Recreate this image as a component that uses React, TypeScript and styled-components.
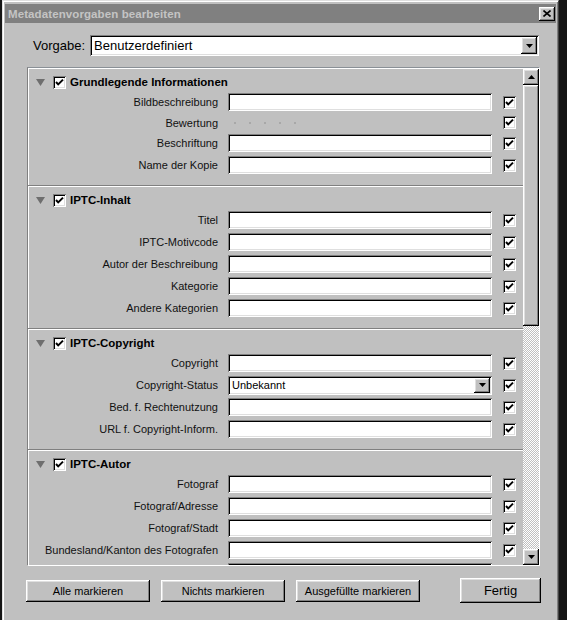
import React from "react";
import styled, { createGlobalStyle, css } from "styled-components";

const Global = createGlobalStyle`
  html, body { margin: 0; padding: 0; background: #151515; overflow: hidden; }
  body { font-family: "Liberation Sans", Arial, sans-serif; }
  #root { width: 567px; height: 620px; }
`;

const raised = css`
  background: #c0c0c0;
  box-shadow: inset -1px -1px 0 #000, inset 1px 1px 0 #fff,
    inset -2px -2px 0 #808080, inset 2px 2px 0 #dfdfdf;
`;

const sunken = css`
  box-shadow: inset 1px 1px 0 #808080, inset -1px -1px 0 #fff,
    inset 2px 2px 0 #000, inset -2px -2px 0 #dfdfdf;
`;

const Window = styled.div`
  margin-left: 2px;
  width: 557px;
  height: 620px;
  box-sizing: border-box;
  background: #c0c0c0;
  border-top: 1px solid #dfdfdf;
  border-left: 1px solid #dfdfdf;
  border-right: 1px solid #404040;
  box-shadow: inset 1px 1px 0 #fff, inset -1px 0 0 #808080;
  padding: 2px 2px 0 2px;
  display: flex;
  flex-direction: column;
`;

const TitleBar = styled.div`
  height: 19px;
  margin-top: 1px;
  background: #808080;
  display: flex;
  align-items: center;
  justify-content: space-between;
  padding: 0 1px 0 3px;
`;

const TitleText = styled.span`
  font: bold 11.5px "Liberation Sans", Arial, sans-serif;
  color: #c4c4c4;
  letter-spacing: 0.1px;
`;

const CloseButton = styled.div`
  ${raised};
  width: 16px;
  height: 14px;
  display: flex;
  align-items: center;
  justify-content: center;
`;

const PresetRow = styled.div`
  margin-top: 12px;
  padding: 0 17px 0 28px;
  display: flex;
  align-items: center;
  gap: 5px;
`;

const PresetLabel = styled.span`
  font-size: 13px;
  color: #000;
`;

const Combo = styled.div`
  ${sunken};
  flex: 1;
  height: 21px;
  box-sizing: border-box;
  background: #fff;
  display: flex;
  align-items: center;
  padding: 2px;
`;

const ComboText = styled.span<{ $size: number }>`
  flex: 1;
  padding-left: 2px;
  font-size: ${(p) => p.$size}px;
  color: #000;
  white-space: nowrap;
`;

const DropButton = styled.div<{ $w: number; $h: number }>`
  ${raised};
  width: ${(p) => p.$w}px;
  height: ${(p) => p.$h}px;
  display: flex;
  align-items: center;
  justify-content: center;
  flex: none;
`;

const Panel = styled.div`
  margin: 11px 0 0 22px;
  width: 513px;
  height: 499px;
  box-sizing: border-box;
  border: 1px solid;
  border-color: #8a9096 #fff #fff #808080;
  box-shadow: inset 1px 1px 0 #fff;
  display: flex;
`;

const Content = styled.div`
  flex: 1;
  overflow: hidden;
  display: flex;
  flex-direction: column;
`;

const Section = styled.section`
  padding: 5px 0 9px;
  flex: none;
  & + & {
    border-top: 1px solid #808080;
    box-shadow: inset 0 1px 0 #fff;
  }
`;

const SectionHeader = styled.div`
  height: 18px;
  display: flex;
  align-items: center;
  padding-left: 8px;
`;

const Disclosure = styled.svg`
  width: 9px;
  height: 7px;
  margin-right: 8px;
  flex: none;
`;

const SectionTitle = styled.span`
  margin-left: 4px;
  font: bold 11.5px "Liberation Sans", Arial, sans-serif;
  color: #000;
`;

const Row = styled.div<{ $h: number }>`
  height: ${(p) => p.$h}px;
  display: flex;
  align-items: center;
`;

const FieldLabel = styled.span`
  width: 190px;
  flex: none;
  text-align: right;
  font-size: 11px;
  color: #111;
  white-space: nowrap;
`;

const TextField = styled.div`
  ${sunken};
  margin-left: 10px;
  width: 264px;
  height: 18px;
  box-sizing: border-box;
  background: #fff;
  flex: none;
`;

const SelectField = styled.div`
  ${sunken};
  margin-left: 10px;
  width: 264px;
  height: 19px;
  box-sizing: border-box;
  background: #fff;
  flex: none;
  display: flex;
  align-items: center;
  padding: 2px;
`;

const Rating = styled.div`
  margin-left: 16px;
  width: 258px;
  display: flex;
  gap: 13px;
  flex: none;
`;

const Dot = styled.span`
  width: 2px;
  height: 2px;
  background: #a8a8a8;
`;

const Box = styled.div<{ $gap: number }>`
  ${sunken};
  margin-left: ${(p) => p.$gap}px;
  width: 13px;
  height: 13px;
  box-sizing: border-box;
  background: #fff;
  flex: none;
  display: flex;
  align-items: center;
  justify-content: center;
`;

const ScrollBar = styled.div`
  width: 16px;
  flex: none;
  display: flex;
  flex-direction: column;
  padding-top: 1px;
`;

const ScrollArrow = styled.div`
  ${raised};
  height: 16px;
  flex: none;
  display: flex;
  align-items: center;
  justify-content: center;
`;

const Thumb = styled.div<{ $h: number }>`
  ${raised};
  height: ${(p) => p.$h}px;
  flex: none;
`;

const Track = styled.div`
  flex: 1;
  background-image: conic-gradient(#fff 25%, #c0c0c0 0 50%, #fff 0 75%, #c0c0c0 0);
  background-size: 2px 2px;
`;

const ButtonRow = styled.div`
  margin-top: 12px;
  height: 25px;
  padding: 0 15px 0 21px;
  display: flex;
  align-items: center;
  gap: 11px;
`;

const PushButton = styled.button<{ $main?: boolean }>`
  ${raised};
  border: 0;
  padding: 0;
  width: ${(p) => (p.$main ? 81 : 124)}px;
  height: ${(p) => (p.$main ? 25 : 22)}px;
  margin-left: ${(p) => (p.$main ? "auto" : "0")};
  font-family: "Liberation Sans", Arial, sans-serif;
  font-size: ${(p) => (p.$main ? 13 : 11)}px;
  color: #000;
`;

const Check = () => (
  <svg width="9" height="9" viewBox="0 0 9 9">
    <polyline points="1,4 3.2,6.4 8,1.6" fill="none" stroke="#000" strokeWidth="2" />
  </svg>
);

const ArrowGlyph = ({ up }: { up?: boolean }) => (
  <svg width="7" height="4" viewBox="0 0 7 4">
    <polygon points={up ? "0,4 7,4 3.5,0" : "0,0 7,0 3.5,4"} fill="#000" />
  </svg>
);

type Field = { label: string; kind?: "text" | "rating" | "select"; value?: string };
type Group = { title: string; fields: Field[] };

const t = (label: string): Field => ({ label, kind: "text" });

const groups: Group[] = [
  {
    title: "Grundlegende Informationen",
    fields: [
      t("Bildbeschreibung"),
      { label: "Bewertung", kind: "rating" },
      t("Beschriftung"),
      t("Name der Kopie"),
    ],
  },
  {
    title: "IPTC-Inhalt",
    fields: [
      t("Titel"),
      t("IPTC-Motivcode"),
      t("Autor der Beschreibung"),
      t("Kategorie"),
      t("Andere Kategorien"),
    ],
  },
  {
    title: "IPTC-Copyright",
    fields: [
      t("Copyright"),
      { label: "Copyright-Status", kind: "select", value: "Unbekannt" },
      t("Bed. f. Rechtenutzung"),
      t("URL f. Copyright-Inform."),
    ],
  },
  {
    title: "IPTC-Autor",
    fields: [
      t("Fotograf"),
      t("Fotograf/Adresse"),
      t("Fotograf/Stadt"),
      t("Bundesland/Kanton des Fotografen"),
      t("Fotograf/Postleitzahl"),
    ],
  },
];

const FieldRow = ({ field }: { field: Field }) => {
  const short = field.kind === "rating";
  return (
    <Row $h={short ? 19 : 22}>
      <FieldLabel>{field.label}</FieldLabel>
      {field.kind === "rating" && (
        <Rating>
          {[0, 1, 2, 3, 4].map((i) => (
            <Dot key={i} />
          ))}
        </Rating>
      )}
      {field.kind === "select" && (
        <SelectField>
          <ComboText $size={11}>{field.value}</ComboText>
          <DropButton $w={16} $h={15}>
            <ArrowGlyph />
          </DropButton>
        </SelectField>
      )}
      {field.kind === "text" && <TextField />}
      <Box $gap={11}>
        <Check />
      </Box>
    </Row>
  );
};

export default function App() {
  return (
    <>
      <Global />
      <Window>
        <TitleBar>
          <TitleText>Metadatenvorgaben bearbeiten</TitleText>
          <CloseButton>
            <svg width="8" height="7" viewBox="0 0 8 7">
              <path d="M0.5 0.5 L7.5 6.5 M7.5 0.5 L0.5 6.5" stroke="#000" strokeWidth="1.6" />
            </svg>
          </CloseButton>
        </TitleBar>

        <PresetRow>
          <PresetLabel>Vorgabe:</PresetLabel>
          <Combo>
            <ComboText $size={13}>Benutzerdefiniert</ComboText>
            <DropButton $w={16} $h={17}>
              <ArrowGlyph />
            </DropButton>
          </Combo>
        </PresetRow>

        <Panel>
          <Content>
            {groups.map((g) => (
              <Section key={g.title}>
                <SectionHeader>
                  <Disclosure viewBox="0 0 9 7">
                    <polygon points="0,0 9,0 4.5,7" fill="#6e6e6e" />
                  </Disclosure>
                  <Box $gap={0}>
                    <Check />
                  </Box>
                  <SectionTitle>{g.title}</SectionTitle>
                </SectionHeader>
                {g.fields.map((f) => (
                  <FieldRow key={f.label} field={f} />
                ))}
              </Section>
            ))}
          </Content>
          <ScrollBar>
            <ScrollArrow>
              <ArrowGlyph up />
            </ScrollArrow>
            <Thumb $h={241} />
            <Track />
            <ScrollArrow>
              <ArrowGlyph />
            </ScrollArrow>
          </ScrollBar>
        </Panel>

        <ButtonRow>
          <PushButton>Alle markieren</PushButton>
          <PushButton>Nichts markieren</PushButton>
          <PushButton>Ausgefüllte markieren</PushButton>
          <PushButton $main>Fertig</PushButton>
        </ButtonRow>
      </Window>
    </>
  );
}
